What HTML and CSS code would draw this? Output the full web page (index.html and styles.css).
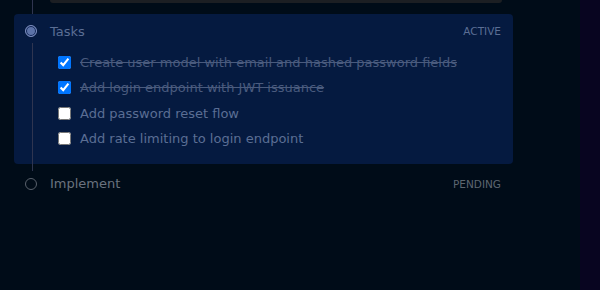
FILE: index.html
```html
<!DOCTYPE html>
<html>
<head>
<meta charset="utf-8">
<link rel="stylesheet" href="styles.css">
</head>
<body>
<div class="app">
  <main class="main">
    <div class="prev-output"></div>
    <section class="step step-active">
      <div class="step-head">
        <span class="dot dot-active"></span>
        <span class="step-name">Tasks</span>
        <span class="step-status">ACTIVE</span>
      </div>
      <ul class="tasks">
        <li class="task task-done"><input type="checkbox" checked><span>Create user model with email and hashed password fields</span></li>
        <li class="task task-done"><input type="checkbox" checked><span>Add login endpoint with JWT issuance</span></li>
        <li class="task"><input type="checkbox"><span>Add password reset flow</span></li>
        <li class="task"><input type="checkbox"><span>Add rate limiting to login endpoint</span></li>
      </ul>
    </section>
    <section class="step step-pending">
      <div class="step-head">
        <span class="dot dot-pending"></span>
        <span class="step-name">Implement</span>
        <span class="step-status">PENDING</span>
      </div>
    </section>
  </main>
  <aside class="side"></aside>
</div>
</body>
</html>
```
FILE: styles.css
```css
* { box-sizing: border-box; }
html, body { margin: 0; padding: 0; }
body {
  background: #000c18;
  font-family: "DejaVu Sans", sans-serif;
  font-size: 13px;
  width: 600px;
  height: 290px;
  overflow: hidden;
}
.app {
  display: flex;
  height: 290px;
}
.main {
  flex: 1;
  position: relative;
}
.side {
  width: 20px;
  background: #080520;
}
.prev-output {
  margin-left: 50px;
  width: 452px;
  height: 3px;
  background: #1c1f23;
  border-radius: 0 0 4px 4px;
}
.step {
  position: relative;
  margin: 0 0 0 14px;
  width: 499px;
}
.step-active {
  margin-top: 11px;
  background: #051a40;
  border-radius: 4px;
  padding: 7px 12px 15px 11px;
}
.step-active::before {
  content: "";
  position: absolute;
  left: 18px;
  top: -14px;
  height: 14px;
  width: 1px;
  background: #2f3550;
}
.step-active::after {
  content: "";
  position: absolute;
  left: 18px;
  top: 29px;
  bottom: -7px;
  width: 1px;
  background: #2f3550;
}
.step-pending {
  padding: 10px 12px 0 11px;
}
.step-head {
  display: flex;
  align-items: center;
  height: 20px;
}
.dot {
  width: 12px;
  height: 12px;
  border-radius: 50%;
  margin-right: 13px;
  flex: none;
}
.dot-active {
  border: 1.5px solid #7c8dbd;
  background: #5d73a8;
  box-shadow: inset 0 0 0 1px #0c2050;
}
.dot-pending {
  border: 1.5px solid #59616c;
}
.step-name {
  flex: 1;
  color: #5b6e94;
}
.step-pending .step-name { color: #6a737f; }
.step-status {
  font-size: 10.5px;
  color: #5b6e94;
}
.step-pending .step-status { color: #5d6670; }
.tasks {
  list-style: none;
  margin: 11px 0 0 0;
  padding: 0 0 0 33px;
  display: flex;
  flex-direction: column;
  gap: 5.5px;
}
.task {
  display: flex;
  align-items: center;
  height: 20px;
  color: #5b6e94;
}
.task input {
  margin: 0 9px 0 0;
  width: 13px;
  height: 13px;
}
.task-done span {
  text-decoration: line-through;
  color: #4a5b7e;
}
```
